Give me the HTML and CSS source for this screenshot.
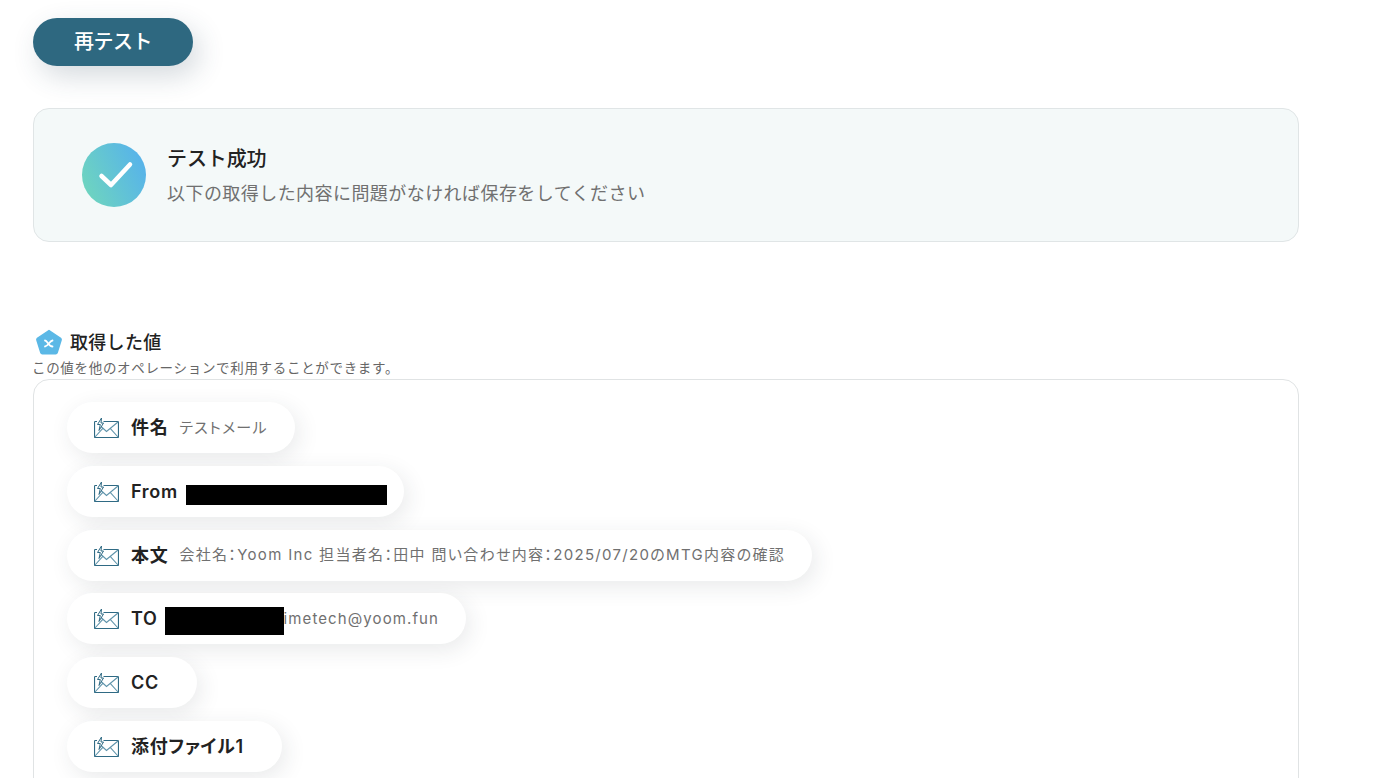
FILE: index.html
```html
<!DOCTYPE html>
<html lang="ja">
<head>
  <meta charset="UTF-8">
  <title>テスト成功</title>
  <link rel="stylesheet" href="styles.css">
</head>
<body>
  <svg class="defs" width="0" height="0">
    <defs>
      <linearGradient id="check-grad" x1="0" y1="0.8" x2="1" y2="0.35">
        <stop offset="0" stop-color="#6fd6bd"/>
        <stop offset="1" stop-color="#57b3ea"/>
      </linearGradient>
      <symbol id="mail" viewBox="0 0 25 21">
        <path d="M3 4.500H1.300a.8.8 0 0 0-.8.8v14.400a.8.8 0 0 0 .8.8h22.400a.8.8 0 0 0 .8-.8V5.300a.8.8 0 0 0-.8-.8H9.500" fill="none" stroke="#2f6a84" stroke-width="1.200"/>
        <path d="M6.500 9l6 5.500L24 5M1 20l7.800-8.600M24 20l-7.800-8.600" fill="none" stroke="#5e93aa" stroke-width="1.100"/>
        <path d="M7.500 1L3.500 7.500h2.800L5 13.500 9.500 6H7z" fill="#fff" stroke="#2f6a84" stroke-width="1" stroke-linejoin="round"/>
      </symbol>
    </defs>
  </svg>

  <button class="retest-btn">再テスト</button>

  <div class="result-card">
    <svg class="check-icon" width="64" height="64" viewBox="0 0 64 64">
      <circle cx="32" cy="32" r="32" fill="url(#check-grad)"/>
      <path d="M19.500 33l9.500 9 19-20.500" fill="none" stroke="#fff" stroke-width="4.500" stroke-linecap="round" stroke-linejoin="round"/>
    </svg>
    <div class="result-text">
      <div class="result-title">テスト成功</div>
      <div class="result-desc">以下の取得した内容に問題がなければ保存をしてください</div>
    </div>
  </div>

  <div class="values-head">
    <svg class="x-icon" width="28" height="27" viewBox="0 0 28 27">
      <path d="M14 1.500L25.600 9.400a1.500 1.500 0 0 1 .5 1.700l-4 12.600a1.500 1.500 0 0 1-1.400 1H7.300a1.500 1.500 0 0 1-1.400-1l-4-12.600a1.500 1.500 0 0 1 .5-1.700z" fill="#5bb8e6" stroke="#5bb8e6" stroke-width="1.500" stroke-linejoin="round"/>
      <path d="M10 11.500c2.500 0 3.500 6 7.500 6M17.500 11.500c-3 .3-4.500 6-7.500 6" fill="none" stroke="#fff" stroke-width="1.800" stroke-linecap="round"/>
    </svg>
    <span class="values-title">取得した値</span>
  </div>
  <div class="values-note">この値を他のオペレーションで利用することができます。</div>

  <div class="values-box">
    <div class="pill">
      <svg class="mail-icon"><use href="#mail"/></svg>
      <span class="pill-name ja">件名</span>
      <span class="pill-value ja">テストメール</span>
    </div>
    <div class="pill">
      <svg class="mail-icon"><use href="#mail"/></svg>
      <span class="pill-name">From</span>
      <span class="redact redact-from"></span>
    </div>
    <div class="pill">
      <svg class="mail-icon"><use href="#mail"/></svg>
      <span class="pill-name ja">本文</span>
      <span class="pill-value ja">会社名：Yoom Inc 担当者名：田中 問い合わせ内容：2025/07/20のMTG内容の確認</span>
    </div>
    <div class="pill">
      <svg class="mail-icon"><use href="#mail"/></svg>
      <span class="pill-name">TO</span>
      <span class="redact redact-to"></span>
      <span class="pill-value tight">imetech@yoom.fun</span>
    </div>
    <div class="pill">
      <svg class="mail-icon"><use href="#mail"/></svg>
      <span class="pill-name">CC</span>
      <span class="pill-value"></span>
    </div>
    <div class="pill">
      <svg class="mail-icon"><use href="#mail"/></svg>
      <span class="pill-name ja">添付ファイル1</span>
      <span class="pill-value"></span>
    </div>
  </div>
</body>
</html>
```

FILE: styles.css
```css
html, body {
  height: 778px;
  overflow: hidden;
}

body {
  margin: 0;
  padding: 18px 0 0 33px;
  box-sizing: border-box;
  background-color: white;
  color: #222;
  font-family: Inter, "Noto Sans CJK JP", sans-serif;
}

.defs {
  position: absolute;
}

.retest-btn {
  display: block;
  width: 160px;
  height: 48px;
  padding: 0 0 3px;
  border: none;
  border-radius: 24px;
  background-color: #2e6880;
  color: white;
  font-family: inherit;
  font-size: 20px;
  font-weight: 500;
  letter-spacing: -0.5px;
  box-shadow: 6px 10px 28px rgba(46, 70, 90, 0.2);
}

.result-card {
  display: flex;
  align-items: center;
  gap: 21px;
  width: 1266px;
  height: 134px;
  margin-top: 42px;
  padding-left: 48px;
  box-sizing: border-box;
  background-color: #f4f9f9;
  border: 1px solid #e0e5e6;
  border-radius: 16px;
}

.result-text {
  padding-top: 2px;
}

.result-title {
  font-size: 20px;
  font-weight: 500;
  line-height: 28px;
  letter-spacing: -0.1px;
}

.result-desc {
  margin-top: 8px;
  font-size: 18px;
  line-height: 26px;
  color: #707070;
  letter-spacing: 0.44px;
}

.values-head {
  display: flex;
  align-items: center;
  gap: 7px;
  height: 28px;
  margin-top: 86px;
  margin-left: 2px;
}

.values-title {
  padding-bottom: 2px;
  font-size: 18px;
  font-weight: 500;
  letter-spacing: 0.3px;
}

.values-note {
  margin: 3px 0 0 -1px;
  height: 18px;
  font-size: 13.5px;
  line-height: 18px;
  color: #666;
  letter-spacing: 0.68px;
}

.values-box {
  display: flex;
  flex-direction: column;
  align-items: flex-start;
  gap: 12.8px;
  width: 1266px;
  height: 500px;
  margin-top: 2px;
  padding: 22px 0 0 33px;
  box-sizing: border-box;
  border: 1px solid #e0e3e4;
  border-radius: 16px;
}

.pill {
  display: flex;
  align-items: center;
  height: 51px;
  padding: 0 27px;
  box-sizing: border-box;
  background-color: white;
  border-radius: 26px;
  box-shadow: 4px 6px 22px rgba(40, 50, 60, 0.1);
}

.mail-icon {
  width: 25px;
  height: 21px;
  margin-right: 12px;
  flex-shrink: 0;
}

.pill-name {
  font-size: 18px;
  font-weight: 600;
  letter-spacing: 0.7px;
  white-space: nowrap;
}

.pill-name.ja {
  margin-top: -3px;
  font-feature-settings: "palt";
}

.pill-value {
  margin-left: 11px;
  font-size: 15px;
  color: #707070;
  letter-spacing: 1.1px;
  white-space: nowrap;
}

.pill-value.ja {
  margin-top: -3px;
  letter-spacing: 1.32px;
  font-feature-settings: "palt";
}

.pill-value.tight {
  margin-left: 0;
}

.redact {
  display: block;
  background-color: black;
}

.redact-from {
  width: 201px;
  height: 20px;
  margin: 7px -10px 0 8px;
}

.redact-to {
  width: 119px;
  height: 28px;
  margin: 5px 0 0 7px;
}
```
